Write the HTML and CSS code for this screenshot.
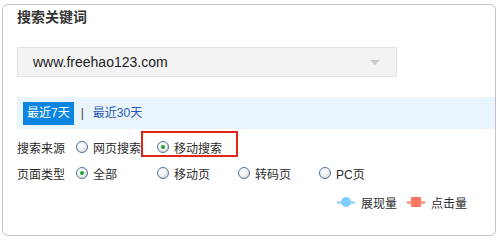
FILE: index.html
```html
<!DOCTYPE html>
<html lang="zh-CN">
<head>
  <meta charset="UTF-8" />
  <title>搜索关键词</title>
  <link rel="stylesheet" href="styles.css">
</head>
<body>

  <div class="panel">
    <h2 class="title">搜索关键词</h2>

    <div class="select-box">
      <span class="select-text">www.freehao123.com</span>
      <span class="select-arrow"></span>
    </div>

    <div class="tabs">
      <span class="tab active">最近7天</span>
      <span class="sep">|</span>
      <span class="tab">最近30天</span>
    </div>

    <div class="filters">
      <div class="filter-row">
        <span class="filter-label">搜索来源</span>
        <label class="option"><span class="radio"></span>网页搜索</label>
        <label class="option marked"><span class="radio checked"></span>移动搜索</label>
      </div>

      <div class="filter-row">
        <span class="filter-label">页面类型</span>
        <label class="option"><span class="radio checked"></span>全部</label>
        <label class="option"><span class="radio"></span>移动页</label>
        <label class="option"><span class="radio"></span>转码页</label>
        <label class="option"><span class="radio"></span>PC页</label>
      </div>
    </div>

    <div class="legend">
      <span class="legend-item"><span class="mark mark-show"></span>展现量</span>
      <span class="legend-item"><span class="mark mark-click"></span>点击量</span>
    </div>
  </div>

</body>
</html>
```

FILE: styles.css
```css
body {
  margin: 0;
  font-family: "Liberation Sans", "Noto Sans CJK SC", sans-serif;
  font-size: 12px;
  color: #2b2b2b;
  background: #fff;
}

.panel {
  margin: 4px 4px 0 2px;
  height: 232px;
  border: 1px solid #c9bdbf;
  border-radius: 6px;
  padding: 2px 0 0 14px;
  box-sizing: border-box;
}

.title {
  margin: 0;
  font-size: 14px;
  line-height: 20px;
  font-weight: bold;
  color: #333;
}

.select-box {
  margin-top: 20px;
  width: 380px;
  height: 30px;
  box-sizing: border-box;
  border: 1px solid #e2e2e2;
  background: #f3f3f3;
  display: flex;
  align-items: center;
  justify-content: space-between;
  padding: 0 16px 0 15px;
}

.select-text {
  font-family: "Liberation Sans", Arial, sans-serif;
  font-size: 14px;
  color: #1c1c24;
}

.select-arrow {
  width: 0;
  height: 0;
  border-left: 5px solid transparent;
  border-right: 5px solid transparent;
  border-top: 5px solid #c9c9c9;
}

.tabs {
  margin-top: 20px;
  height: 32px;
  background: #e9f4fd;
  display: flex;
  align-items: center;
  padding-left: 6px;
}

.tab {
  line-height: 23px;
  padding: 0 4px;
  color: #2a5db0;
}

.tab.active {
  background: #0a86e2;
  color: #fff;
}

.sep {
  margin: 0 5px 0 7px;
  color: #444;
}

.filters {
  margin-top: 5px;
}

.filter-row {
  display: flex;
  align-items: stretch;
  height: 26px;
}

.filter-label {
  width: 59px;
  display: flex;
  align-items: center;
}

.option {
  position: relative;
  width: 81px;
  display: flex;
  align-items: center;
}

.option.marked::after {
  content: "";
  position: absolute;
  left: -16px;
  top: -3px;
  width: 97px;
  height: 26px;
  box-sizing: border-box;
  border: 2px solid #e1251b;
}

.radio {
  width: 12px;
  height: 12px;
  box-sizing: border-box;
  border: 1px solid #4f7598;
  border-radius: 50%;
  background: radial-gradient(circle at 40% 35%, #fff 0%, #f2f2f2 45%, #c9c9c9 100%);
  margin-right: 5px;
  position: relative;
}

.radio.checked::after {
  content: "";
  position: absolute;
  left: 3px;
  top: 3px;
  width: 4px;
  height: 4px;
  border-radius: 50%;
  background: #1fa12a;
}

.legend {
  display: flex;
  justify-content: flex-end;
  align-items: center;
  margin-top: 6px;
  padding-right: 28px;
  height: 20px;
}

.legend-item {
  display: flex;
  align-items: center;
  margin-left: 10px;
}

.mark {
  position: relative;
  width: 18px;
  height: 3px;
  margin-right: 6px;
}

.mark::after {
  content: "";
  position: absolute;
  left: 4px;
  top: -4px;
  width: 10px;
  height: 10px;
}

.mark-show {
  background: #a6dcff;
}

.mark-show::after {
  background: #7ecdfd;
  border-radius: 50%;
}

.mark-click {
  background: #ffa393;
}

.mark-click::after {
  background: #ff7865;
  border-radius: 1px;
}
```
